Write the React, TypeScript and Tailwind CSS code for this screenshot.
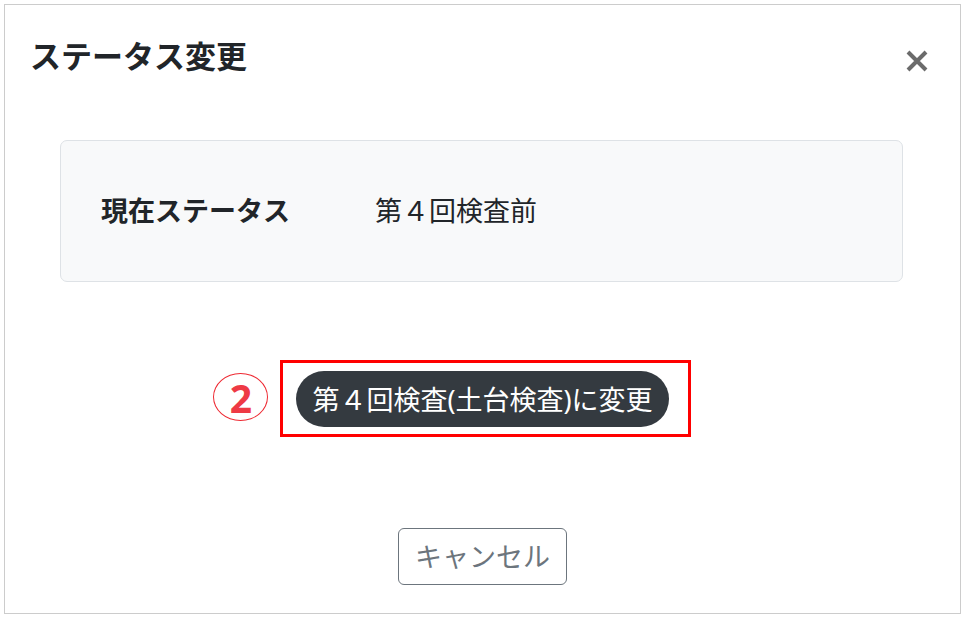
import React from 'react'

const FONT = { fontFamily: '"Noto Sans", "Noto Sans CJK JP", sans-serif' }

function CloseIcon() {
    return (
        <svg width="24" height="24" viewBox="0 0 24 24" className="shrink-0">
            <path d="M3 3 L21 21 M21 3 L3 21" stroke="#6b6b6b" strokeWidth="4" strokeLinecap="butt" />
        </svg>
    )
}

export default function App() {
    return (
        <div className="w-[966px] h-[618px] bg-white pt-[4px] pl-[4px]" style={FONT}>
            <div className="w-[957px] h-[610px] border border-[#cccccc] flex flex-col">
                {/* Header */}
                <div className="h-[135px] flex items-start justify-between pl-[25px] pr-[31px] pt-[33px]">
                    <h5 className="text-[31px] leading-[36px] font-bold text-[#212529]">ステータス変更</h5>
                    <div className="mt-[11px]">
                        <CloseIcon />
                    </div>
                </div>

                {/* Current status */}
                <div className="ml-[55px] mr-[57px] h-[142px] rounded-[7px] border border-[#dee2e6] bg-[#f8f9fa] flex items-center pl-[40px]">
                    <div className="w-[274px] text-[27px] font-bold text-[#212529]">現在ステータス</div>
                    <div className="text-[27px] text-[#212529]">第４回検査前</div>
                </div>

                {/* Change action */}
                <div className="mt-[89px] flex justify-center">
                    <div className="relative">
                        <button className="h-[56px] px-[16px] rounded-full bg-[#343a40] text-white text-[27px] leading-none">
                            第４回検査(土台検査)に変更
                        </button>
                        {/* annotation */}
                        <div className="absolute left-[-16px] right-[-22px] top-[-11px] bottom-[-10px] border-[3px] border-[#ff0000] pointer-events-none" />
                        <div className="absolute left-[-83px] top-[2px] w-[55px] h-[48px] rounded-[50%] border-[1.5px] border-[#ee2a33] flex items-center justify-center text-[39px] font-bold leading-none text-[#ee3a45]">
                            2
                        </div>
                    </div>
                </div>

                {/* Footer */}
                <div className="mt-[101px] flex justify-center">
                    <button className="h-[57px] px-[16px] rounded-[6px] border border-[#6c757d] text-[#6c757d] text-[27px] leading-none">
                        キャンセル
                    </button>
                </div>
            </div>
        </div>
    )
}
